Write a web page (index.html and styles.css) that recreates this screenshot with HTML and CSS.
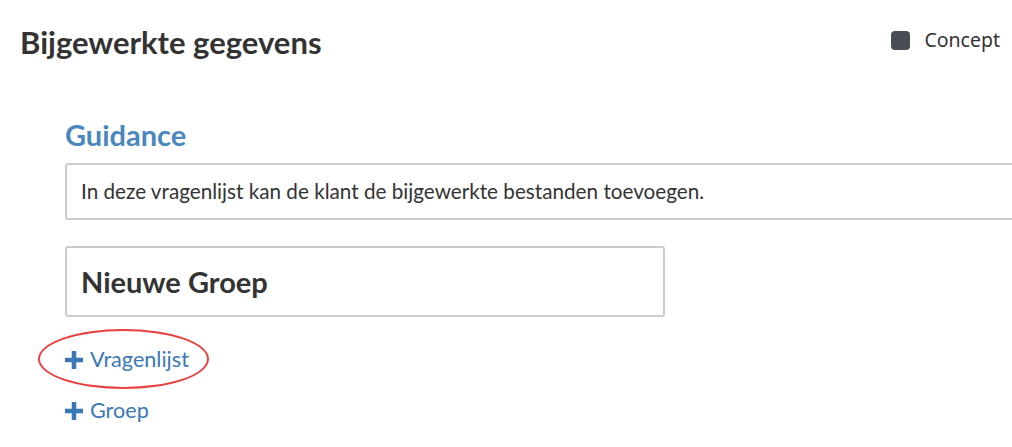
FILE: index.html
```html
<!DOCTYPE html>
<html lang="nl">
<head>
<meta charset="utf-8">
<title>Bijgewerkte gegevens</title>
<link rel="stylesheet" href="styles.css">
</head>
<body>
<div class="page">
  <header class="header">
    <h1 class="title">Bijgewerkte gegevens</h1>
    <label class="status">
      <span class="status-box"></span>
      <span class="status-label">Concept</span>
    </label>
  </header>
  <main class="content">
    <h2 class="section-title">Guidance</h2>
    <div class="guidance">In deze vragenlijst kan de klant de bijgewerkte bestanden toevoegen.</div>
    <div class="group">Nieuwe Groep</div>
    <div class="actions">
      <a class="add-link highlighted" href="#">
        <svg class="plus" viewBox="0 0 16 16" width="18" height="18" aria-hidden="true"><path d="M6 0h4v6h6v4h-6v6H6v-6H0V6h6z"/></svg>
        <span>Vragenlijst</span>
      </a>
      <a class="add-link" href="#">
        <svg class="plus" viewBox="0 0 16 16" width="18" height="18" aria-hidden="true"><path d="M6 0h4v6h6v4h-6v6H6v-6H0V6h6z"/></svg>
        <span>Groep</span>
      </a>
    </div>
  </main>
</div>
</body>
</html>
```
FILE: styles.css
```css
html, body {
  margin: 0;
  padding: 0;
  background: #ffffff;
  overflow: hidden;
}

body {
  font-family: Lato, "Open Sans", sans-serif;
  color: #333333;
}

.page {
  width: 1012px;
}

.header {
  display: flex;
  justify-content: space-between;
  align-items: flex-start;
  padding: 22px 12px 0 20px;
}

.title {
  margin: 0;
  font-size: 31px;
  font-weight: 700;
  line-height: 40px;
  color: #333333;
}

.status {
  display: flex;
  align-items: center;
  gap: 14px;
  padding-top: 6px;
  font-family: "Noto Sans", "Open Sans", sans-serif;
  font-size: 19.5px;
  line-height: 24px;
  color: #333333;
}

.status-box {
  width: 19px;
  height: 19px;
  border-radius: 4px;
  background: #474c55;
}

.content {
  padding: 56px 0 0 65px;
}

.section-title {
  margin: 0 0 11px;
  font-size: 29px;
  font-weight: 700;
  line-height: 34px;
  color: #4a87be;
}

.guidance {
  margin-right: -6px;
  border: 2px solid #cccccc;
  border-radius: 3px;
  padding: 14px 14px 14px;
  font-size: 20.7px;
  line-height: 25px;
  color: #333333;
}

.group {
  width: 600px;
  box-sizing: border-box;
  margin-top: 26px;
  border: 2px solid #cccccc;
  border-radius: 3px;
  padding: 16px 14px 15px;
  font-size: 29px;
  font-weight: 700;
  line-height: 36px;
  color: #333333;
}

.actions {
  display: flex;
  flex-direction: column;
  align-items: flex-start;
  gap: 22px;
  margin-top: 28px;
}

.add-link {
  position: relative;
  display: flex;
  align-items: center;
  gap: 7px;
  font-size: 21.6px;
  line-height: 29px;
  color: #3a78b5;
  text-decoration: none;
}

.plus {
  fill: #3a78b5;
}

.highlighted::before {
  content: "";
  position: absolute;
  left: -27px;
  top: -16px;
  width: 167px;
  height: 56px;
  border: 2px solid #e8403f;
  border-radius: 50%;
}
```
